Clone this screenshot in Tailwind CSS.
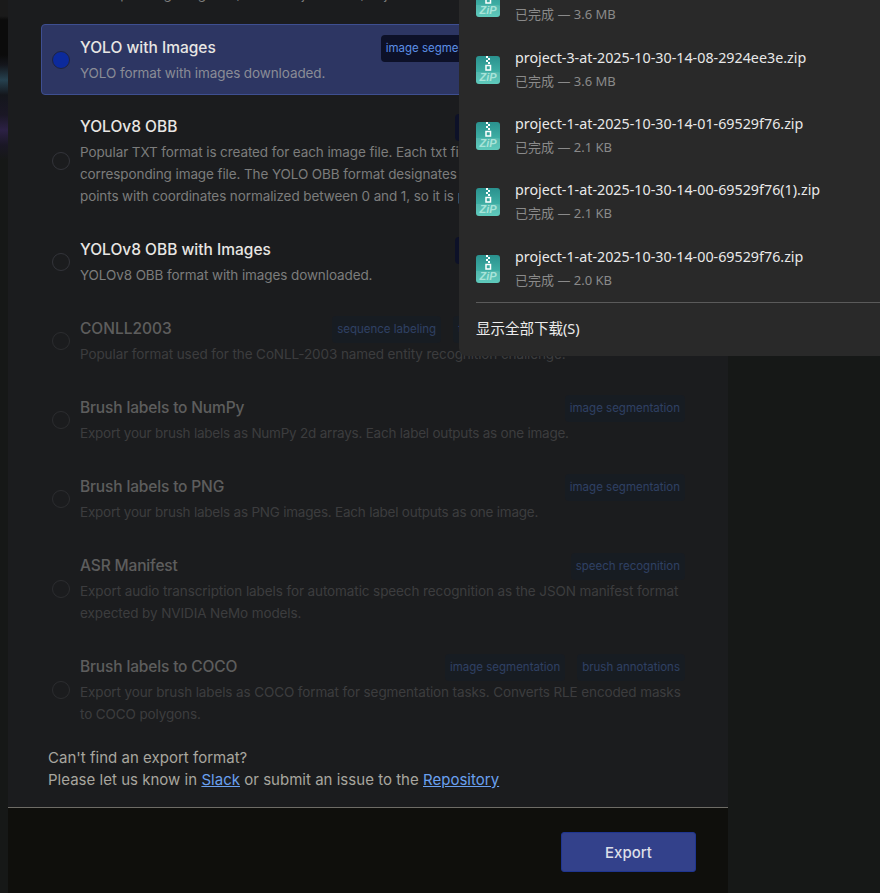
<!DOCTYPE html>
<html lang="en">
  <head>
    <meta charset="UTF-8" />
    <title>Export</title>
    <script src="https://cdn.jsdelivr.net/npm/@tailwindcss/browser@4"></script>
  </head>
  <body class="bg-[#161817]">
    <div class="relative flex h-[893px] w-[880px] overflow-hidden font-['Inter',sans-serif]">
      <!-- page behind the modal -->
      <div class="w-2 shrink-0 bg-[linear-gradient(180deg,#1a1a1a_0,#1a1a1a_16px,#0b0b0b_20px,#0b0b0b_55px,#14161c_65px,#26414f_80px,#14161c_95px,#1a1725_115px,#2c2145_130px,#1a1725_145px,#161817_160px)]"></div>

      <!-- modal -->
      <div class="flex w-[720px] shrink-0 flex-col overflow-hidden bg-[#1b1c1e]">
        <div class="-mt-[77px] flex flex-col gap-2 pl-[33px] pr-[32px]">
          <!-- YOLO -->
          <div class="flex h-[93px] items-center gap-2.5 rounded border border-transparent px-2.5">
            <span class="h-[18px] w-[18px] shrink-0 rounded-full border border-[#33343a]"></span>
            <div class="min-w-0 flex-1">
              <div class="flex h-[27px] items-center justify-between">
                <span class="pb-[2px] text-[15.5px] font-medium text-[#e8e6e3]">YOLO</span>
              </div>
              <p class="whitespace-nowrap text-[13.5px] leading-[22px] tracking-[-0.1px] text-[#7c7c7c]">Popular TXT format is created for each image file. Each txt file contains annotations for the<br />corresponding image file, that is object class, object coordinates, height &amp; width.</p>
            </div>
          </div>

          <!-- YOLO with Images -->
          <div class="flex h-[71px] items-center gap-2.5 rounded border border-[#3e4f91] bg-[#2d3663] px-2.5">
            <span class="h-[18px] w-[18px] shrink-0 rounded-full border border-[#20243f] bg-[#0c2a9c]"></span>
            <div class="min-w-0 flex-1">
              <div class="flex h-[27px] items-center justify-between">
                <span class="pb-[2px] text-[15.5px] font-medium text-[#e8e6e3]">YOLO with Images</span>
                <div class="flex gap-3 text-[11.5px] text-[#5c8fe6]">
                  <span class="flex h-[27px] items-center rounded-sm bg-[#0d1128] px-[5px]">image segmentation</span>
                  <span class="flex h-[27px] items-center rounded-sm bg-[#0d1128] px-[5px]">object detection</span>
                  <span class="flex h-[27px] items-center rounded-sm bg-[#0d1128] px-[5px]">keypoints</span>
                </div>
              </div>
              <p class="text-[13.5px] leading-[22px] tracking-[-0.1px] text-[#8a8c96]">YOLO format with images downloaded.</p>
            </div>
          </div>

          <!-- YOLOv8 OBB -->
          <div class="flex h-[115px] items-center gap-2.5 rounded border border-transparent px-2.5">
            <span class="h-[18px] w-[18px] shrink-0 rounded-full border border-[#33343a]"></span>
            <div class="min-w-0 flex-1">
              <div class="flex h-[27px] items-center justify-between">
                <span class="pb-[2px] text-[15.5px] font-medium text-[#e8e6e3]">YOLOv8 OBB</span>
                <div class="flex gap-3 text-[11.5px] text-[#5c8fe6]">
                  <span class="flex h-[27px] items-center rounded-sm bg-[#0d1128] px-[5px]">image segmentation</span>
                  <span class="flex h-[27px] items-center rounded-sm bg-[#0d1128] px-[5px]">object detection</span>
                </div>
              </div>
              <p class="whitespace-nowrap text-[13.5px] leading-[22px] tracking-[-0.1px] text-[#7c7c7c]">Popular TXT format is created for each image file. Each txt file contains annotations for the<br />corresponding image file. The YOLO OBB format designates bounding boxes by their four corner<br />points with coordinates normalized between 0 and 1, so it is possible to scale them.</p>
            </div>
          </div>

          <!-- YOLOv8 OBB with Images -->
          <div class="flex h-[71px] items-center gap-2.5 rounded border border-transparent px-2.5">
            <span class="h-[18px] w-[18px] shrink-0 rounded-full border border-[#33343a]"></span>
            <div class="min-w-0 flex-1">
              <div class="flex h-[27px] items-center justify-between">
                <span class="pb-[2px] text-[15.5px] font-medium text-[#e8e6e3]">YOLOv8 OBB with Images</span>
                <div class="flex gap-3 text-[11.5px] text-[#5c8fe6]">
                  <span class="flex h-[27px] items-center rounded-sm bg-[#0d1128] px-[5px]">image segmentation</span>
                  <span class="flex h-[27px] items-center rounded-sm bg-[#0d1128] px-[5px]">object detection</span>
                </div>
              </div>
              <p class="text-[13.5px] leading-[22px] tracking-[-0.1px] text-[#7c7c7c]">YOLOv8 OBB format with images downloaded.</p>
            </div>
          </div>

          <!-- CONLL2003 -->
          <div class="flex h-[71px] items-center gap-2.5 rounded border border-transparent px-2.5 opacity-40">
            <span class="h-[18px] w-[18px] shrink-0 rounded-full border border-[#45464a]"></span>
            <div class="min-w-0 flex-1">
              <div class="flex h-[27px] items-center justify-between">
                <span class="pb-[2px] text-[15.5px] font-medium text-[#c0bfbd]">CONLL2003</span>
                <div class="flex gap-3 text-[11.5px] text-[#4d78ca]">
                  <span class="flex h-[27px] items-center rounded-sm bg-[#131c28] px-[5px]">sequence labeling</span>
                  <span class="flex h-[27px] items-center rounded-sm bg-[#131c28] px-[5px]">text tagging</span>
                  <span class="flex h-[27px] items-center rounded-sm bg-[#131c28] px-[5px]">named entity recognition</span>
                </div>
              </div>
              <p class="text-[13.5px] leading-[22px] tracking-[-0.1px] text-[#6e6e6e]">Popular format used for the CoNLL-2003 named entity recognition challenge.</p>
            </div>
          </div>

          <!-- Brush labels to NumPy -->
          <div class="flex h-[71px] items-center gap-2.5 rounded border border-transparent px-2.5 opacity-40">
            <span class="h-[18px] w-[18px] shrink-0 rounded-full border border-[#45464a]"></span>
            <div class="min-w-0 flex-1">
              <div class="flex h-[27px] items-center justify-between">
                <span class="pb-[2px] text-[15.5px] font-medium tracking-[-0.15px] text-[#c0bfbd]">Brush labels to NumPy</span>
                <div class="flex gap-3 text-[11.5px] text-[#4d78ca]">
                  <span class="flex h-[27px] items-center rounded-sm bg-[#131c28] px-[5px]">image segmentation</span>
                </div>
              </div>
              <p class="text-[13.5px] leading-[22px] tracking-[-0.22px] text-[#6e6e6e]">Export your brush labels as NumPy 2d arrays. Each label outputs as one image.</p>
            </div>
          </div>

          <!-- Brush labels to PNG -->
          <div class="flex h-[71px] items-center gap-2.5 rounded border border-transparent px-2.5 opacity-40">
            <span class="h-[18px] w-[18px] shrink-0 rounded-full border border-[#45464a]"></span>
            <div class="min-w-0 flex-1">
              <div class="flex h-[27px] items-center justify-between">
                <span class="pb-[2px] text-[15.5px] font-medium tracking-[-0.15px] text-[#c0bfbd]">Brush labels to PNG</span>
                <div class="flex gap-3 text-[11.5px] text-[#4d78ca]">
                  <span class="flex h-[27px] items-center rounded-sm bg-[#131c28] px-[5px]">image segmentation</span>
                </div>
              </div>
              <p class="text-[13.5px] leading-[22px] tracking-[-0.22px] text-[#6e6e6e]">Export your brush labels as PNG images. Each label outputs as one image.</p>
            </div>
          </div>

          <!-- ASR Manifest -->
          <div class="flex h-[93px] items-center gap-2.5 rounded border border-transparent px-2.5 opacity-40">
            <span class="h-[18px] w-[18px] shrink-0 rounded-full border border-[#45464a]"></span>
            <div class="min-w-0 flex-1">
              <div class="flex h-[27px] items-center justify-between">
                <span class="pb-[2px] text-[15.5px] font-medium tracking-[-0.15px] text-[#c0bfbd]">ASR Manifest</span>
                <div class="flex gap-3 text-[11.5px] text-[#4d78ca]">
                  <span class="flex h-[27px] items-center rounded-sm bg-[#131c28] px-[5px]">speech recognition</span>
                </div>
              </div>
              <p class="text-[13.5px] leading-[22px] tracking-[-0.1px] text-[#6e6e6e]">Export audio transcription labels for automatic speech recognition as the JSON manifest format<br />expected by NVIDIA NeMo models.</p>
            </div>
          </div>

          <!-- Brush labels to COCO -->
          <div class="flex h-[93px] items-center gap-2.5 rounded border border-transparent px-2.5 opacity-40">
            <span class="h-[18px] w-[18px] shrink-0 rounded-full border border-[#45464a]"></span>
            <div class="min-w-0 flex-1">
              <div class="flex h-[27px] items-center justify-between">
                <span class="pb-[2px] text-[15.5px] font-medium tracking-[-0.15px] text-[#c0bfbd]">Brush labels to COCO</span>
                <div class="flex gap-3 text-[11.5px] text-[#4d78ca]">
                  <span class="flex h-[27px] items-center rounded-sm bg-[#131c28] px-[5px]">image segmentation</span>
                  <span class="flex h-[27px] items-center rounded-sm bg-[#131c28] px-[5px]">brush annotations</span>
                </div>
              </div>
              <p class="text-[13.5px] leading-[22px] tracking-[-0.12px] text-[#6e6e6e]">Export your brush labels as COCO format for segmentation tasks. Converts RLE encoded masks<br />to COCO polygons.</p>
            </div>
          </div>
        </div>

        <!-- help text -->
        <div class="mt-[11px] pl-10 text-[15px] leading-[22px] tracking-[0.02px] text-[#a8a69f]">
          <p>Can't find an export format?</p>
          <p>Please let us know in <a href="#" class="text-[#6aa0ef] underline">Slack</a> or submit an issue to the <a href="#" class="text-[#6aa0ef] underline">Repository</a></p>
        </div>

        <!-- footer -->
        <div class="mt-4 flex flex-1 items-start justify-end border-t border-[#6e6c66] bg-[#0f0f0c] pr-8 pt-6">
          <button class="h-10 w-[135px] rounded-[3px] border border-[#1f3590] bg-[#33418b] pt-0.5 text-[15px] font-medium text-[#dcdfe8]">Export</button>
        </div>
      </div>

      <!-- downloads popup -->
      <div class="absolute right-0 top-0 h-[356px] w-[421px] overflow-hidden rounded-bl-lg bg-[#292929] font-['Noto_Sans','Noto_Sans_CJK_SC',sans-serif]">
        <div class="-mt-[30px] flex flex-col pl-[17px]">
          <div class="flex h-[66.4px] items-center gap-[15px]">
            <svg class="h-7 w-6 shrink-0" viewBox="0 0 24 28"><defs><linearGradient id="z1" x1="0" y1="0" x2="0" y2="1"><stop offset="0" stop-color="#2a918e" /><stop offset="1" stop-color="#4dc4b4" /></linearGradient></defs><rect width="24" height="28" rx="3" fill="url(#z1)" /><path d="M3 16H21Q24 16 24 17V25A3 3 0 0 1 21 28H3A3 3 0 0 1 0 25V16Z" fill="#fff" fill-opacity=".1" /><path d="M10 0h2v2h-2zM12 2h2v2h-2zM10 4h2v2h-2zM12 6h2v2h-2z" fill="#fff" /><path d="M10 9.500h4.500V14H10z" fill="none" stroke="#fff" stroke-width="1.500" /><text x="12" y="25" text-anchor="middle" font-family="Liberation Sans" font-size="11" font-weight="700" font-style="italic" fill="#a8e4d9">ZiP</text></svg>
            <div>
              <p class="text-[14.3px] leading-[22px] text-[#e8e8e8]">project-3-at-2025-10-30-14-08-2924ee3e(1).zip</p>
              <p class="text-[13px] leading-[24px] text-[#8a8a8a]">已完成 — 3.6 MB</p>
            </div>
          </div>
          <div class="flex h-[66.4px] items-center gap-[15px]">
            <svg class="h-7 w-6 shrink-0" viewBox="0 0 24 28"><rect width="24" height="28" rx="3" fill="url(#z1)" /><path d="M3 16H21Q24 16 24 17V25A3 3 0 0 1 21 28H3A3 3 0 0 1 0 25V16Z" fill="#fff" fill-opacity=".1" /><path d="M10 0h2v2h-2zM12 2h2v2h-2zM10 4h2v2h-2zM12 6h2v2h-2z" fill="#fff" /><path d="M10 9.500h4.500V14H10z" fill="none" stroke="#fff" stroke-width="1.500" /><text x="12" y="25" text-anchor="middle" font-family="Liberation Sans" font-size="11" font-weight="700" font-style="italic" fill="#a8e4d9">ZiP</text></svg>
            <div>
              <p class="text-[14.3px] leading-[22px] text-[#e8e8e8]">project-3-at-2025-10-30-14-08-2924ee3e.zip</p>
              <p class="text-[13px] leading-[24px] text-[#8a8a8a]">已完成 — 3.6 MB</p>
            </div>
          </div>
          <div class="flex h-[66.4px] items-center gap-[15px]">
            <svg class="h-7 w-6 shrink-0" viewBox="0 0 24 28"><rect width="24" height="28" rx="3" fill="url(#z1)" /><path d="M3 16H21Q24 16 24 17V25A3 3 0 0 1 21 28H3A3 3 0 0 1 0 25V16Z" fill="#fff" fill-opacity=".1" /><path d="M10 0h2v2h-2zM12 2h2v2h-2zM10 4h2v2h-2zM12 6h2v2h-2z" fill="#fff" /><path d="M10 9.500h4.500V14H10z" fill="none" stroke="#fff" stroke-width="1.500" /><text x="12" y="25" text-anchor="middle" font-family="Liberation Sans" font-size="11" font-weight="700" font-style="italic" fill="#a8e4d9">ZiP</text></svg>
            <div>
              <p class="text-[14.3px] leading-[22px] text-[#e8e8e8]">project-1-at-2025-10-30-14-01-69529f76.zip</p>
              <p class="text-[13px] leading-[24px] text-[#8a8a8a]">已完成 — 2.1 KB</p>
            </div>
          </div>
          <div class="flex h-[66.4px] items-center gap-[15px]">
            <svg class="h-7 w-6 shrink-0" viewBox="0 0 24 28"><rect width="24" height="28" rx="3" fill="url(#z1)" /><path d="M3 16H21Q24 16 24 17V25A3 3 0 0 1 21 28H3A3 3 0 0 1 0 25V16Z" fill="#fff" fill-opacity=".1" /><path d="M10 0h2v2h-2zM12 2h2v2h-2zM10 4h2v2h-2zM12 6h2v2h-2z" fill="#fff" /><path d="M10 9.500h4.500V14H10z" fill="none" stroke="#fff" stroke-width="1.500" /><text x="12" y="25" text-anchor="middle" font-family="Liberation Sans" font-size="11" font-weight="700" font-style="italic" fill="#a8e4d9">ZiP</text></svg>
            <div>
              <p class="text-[14.3px] leading-[22px] text-[#e8e8e8]">project-1-at-2025-10-30-14-00-69529f76(1).zip</p>
              <p class="text-[13px] leading-[24px] text-[#8a8a8a]">已完成 — 2.1 KB</p>
            </div>
          </div>
          <div class="flex h-[66.4px] items-center gap-[15px]">
            <svg class="h-7 w-6 shrink-0" viewBox="0 0 24 28"><rect width="24" height="28" rx="3" fill="url(#z1)" /><path d="M3 16H21Q24 16 24 17V25A3 3 0 0 1 21 28H3A3 3 0 0 1 0 25V16Z" fill="#fff" fill-opacity=".1" /><path d="M10 0h2v2h-2zM12 2h2v2h-2zM10 4h2v2h-2zM12 6h2v2h-2z" fill="#fff" /><path d="M10 9.500h4.500V14H10z" fill="none" stroke="#fff" stroke-width="1.500" /><text x="12" y="25" text-anchor="middle" font-family="Liberation Sans" font-size="11" font-weight="700" font-style="italic" fill="#a8e4d9">ZiP</text></svg>
            <div>
              <p class="text-[14.3px] leading-[22px] text-[#e8e8e8]">project-1-at-2025-10-30-14-00-69529f76.zip</p>
              <p class="text-[13px] leading-[24px] text-[#8a8a8a]">已完成 — 2.0 KB</p>
            </div>
          </div>
          <div class="border-t border-[#5a5a5a] pt-[13px] text-[14.5px] leading-[25px] text-[#ececec]">显示全部下载(S)</div>
        </div>
      </div>
    </div>
  </body>
</html>
